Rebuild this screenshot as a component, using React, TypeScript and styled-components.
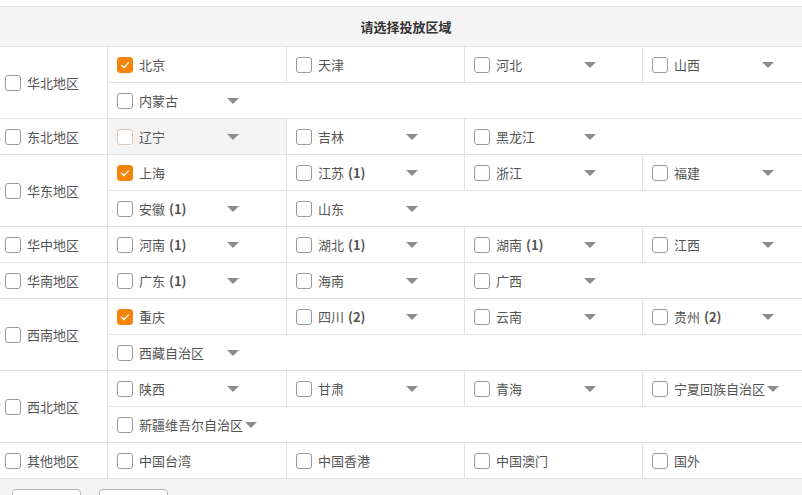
import React from 'react';
import styled, { createGlobalStyle } from 'styled-components';

interface Province {
  name: string;
  count?: number;
  checked?: boolean;
  caret?: boolean;
  hover?: boolean;
}

interface Region {
  name: string;
  provinces: Province[];
}

const GlobalStyle = createGlobalStyle`
  html, body {
    margin: 0;
    padding: 0;
    background: #fff;
    overflow: hidden;
  }
  body {
    font-family: "Noto Sans CJK SC", "Noto Sans", sans-serif;
    font-size: 13px;
    line-height: 1;
    color: #555;
  }
`;

const Page = styled.div`
  padding-top: 6px;
  width: 820px;
`;

const Header = styled.div`
  height: 39px;
  border-top: 1px solid #e2e2e2;
  border-bottom: 1px solid #e2e2e2;
  background: #f4f4f4;
  display: flex;
  align-items: center;
  justify-content: center;
  padding-right: 8px;
  font-weight: bold;
  color: #333;
  font-size: 13px;
`;

const RegionRow = styled.div`
  display: grid;
  grid-template-columns: 108px 1fr;
  border-bottom: 1px solid #e2e2e2;
`;

const RegionCell = styled.label`
  display: flex;
  align-items: center;
  gap: 6px;
  padding-left: 5px;
  border-right: 1px solid #e2e2e2;
`;

const SubRows = styled.div`
  display: flex;
  flex-direction: column;
`;

const SubRow = styled.div`
  display: flex;
  height: 35px;
  &:not(:last-child) {
    border-bottom: 1px solid #e2e2e2;
  }
`;

const Cell = styled.div<{ $hover?: boolean; $first?: boolean }>`
  width: 178px;
  box-sizing: border-box;
  display: flex;
  align-items: center;
  padding-left: 9px;
  border-left: ${(p) => (p.$first ? 'none' : '1px solid #e2e2e2')};
  background: ${(p) => (p.$hover ? '#f4f4f4' : 'transparent')};
`;

const Box = styled.span<{ $checked?: boolean; $hover?: boolean }>`
  width: 16px;
  height: 16px;
  box-sizing: border-box;
  border-radius: 3px;
  flex-shrink: 0;
  border: 1px solid
    ${(p) => (p.$checked ? '#f5840c' : p.$hover ? '#d8c6b4' : '#9a9a9a')};
  background: ${(p) => (p.$checked ? '#f5840c' : '#fff')};
  display: flex;
  align-items: center;
  justify-content: center;
`;

const Label = styled.span`
  margin-left: 6px;
  min-width: 86px;
  white-space: nowrap;
  color: #555;
  padding-bottom: 1px;
`;

const Count = styled.b`
  color: #555;
  margin-left: 4px;
`;

const Caret = styled.span`
  width: 0;
  height: 0;
  border-left: 6px solid transparent;
  border-right: 6px solid transparent;
  border-top: 6px solid #8c8c8c;
  margin-left: 2px;
`;

const Footer = styled.div`
  background: #f3f3f3;
  height: 7px;
  display: flex;
  gap: 18px;
  padding: 10px 12px 0;
  overflow: hidden;
`;

const Button = styled.button`
  width: 69px;
  height: 30px;
  flex-shrink: 0;
  background: #fff;
  border: 1px solid #b5b5b5;
  border-radius: 4px;
`;

const regions: Region[] = [
  {
    name: '华北地区',
    provinces: [
      { name: '北京', checked: true },
      { name: '天津' },
      { name: '河北', caret: true },
      { name: '山西', caret: true },
      { name: '内蒙古', caret: true },
    ],
  },
  {
    name: '东北地区',
    provinces: [
      { name: '辽宁', caret: true, hover: true },
      { name: '吉林', caret: true },
      { name: '黑龙江', caret: true },
    ],
  },
  {
    name: '华东地区',
    provinces: [
      { name: '上海', checked: true },
      { name: '江苏', count: 1, caret: true },
      { name: '浙江', caret: true },
      { name: '福建', caret: true },
      { name: '安徽', count: 1, caret: true },
      { name: '山东', caret: true },
    ],
  },
  {
    name: '华中地区',
    provinces: [
      { name: '河南', count: 1, caret: true },
      { name: '湖北', count: 1, caret: true },
      { name: '湖南', count: 1, caret: true },
      { name: '江西', caret: true },
    ],
  },
  {
    name: '华南地区',
    provinces: [
      { name: '广东', count: 1, caret: true },
      { name: '海南', caret: true },
      { name: '广西', caret: true },
    ],
  },
  {
    name: '西南地区',
    provinces: [
      { name: '重庆', checked: true },
      { name: '四川', count: 2, caret: true },
      { name: '云南', caret: true },
      { name: '贵州', count: 2, caret: true },
      { name: '西藏自治区', caret: true },
    ],
  },
  {
    name: '西北地区',
    provinces: [
      { name: '陕西', caret: true },
      { name: '甘肃', caret: true },
      { name: '青海', caret: true },
      { name: '宁夏回族自治区', caret: true },
      { name: '新疆维吾尔自治区', caret: true },
    ],
  },
  {
    name: '其他地区',
    provinces: [
      { name: '中国台湾' },
      { name: '中国香港' },
      { name: '中国澳门' },
      { name: '国外' },
    ],
  },
];

const Check: React.FC<{ checked?: boolean; hover?: boolean }> = ({ checked, hover }) => (
  <Box $checked={checked} $hover={hover}>
    {checked && (
      <svg width="10" height="8" viewBox="0 0 10 8">
        <path d="M1.2 4 L4 6.6 L8.8 1.4" stroke="#fff" strokeWidth="1.4" fill="none" />
      </svg>
    )}
  </Box>
);

// 4 per line
const chunk = (list: Province[]) => {
  const rows: Province[][] = [];
  for (let i = 0; i < list.length; i += 4) rows.push(list.slice(i, i + 4));
  return rows;
};

const App: React.FC = () => (
  <Page>
    <GlobalStyle />
    <Header>请选择投放区域</Header>
    {regions.map((region) => (
      <RegionRow key={region.name}>
        <RegionCell>
          <Check />
          {region.name}
        </RegionCell>
        <SubRows>
          {chunk(region.provinces).map((row, i) => (
            <SubRow key={i}>
              {row.map((p, j) => (
                <Cell key={p.name} $first={j === 0} $hover={p.hover}>
                  <Check checked={p.checked} hover={p.hover} />
                  <Label>
                    {p.name}
                    {p.count !== undefined && <Count>({p.count})</Count>}
                  </Label>
                  {p.caret && <Caret />}
                </Cell>
              ))}
            </SubRow>
          ))}
        </SubRows>
      </RegionRow>
    ))}
    <Footer>
      <Button />
      <Button />
    </Footer>
  </Page>
);

export default App;
